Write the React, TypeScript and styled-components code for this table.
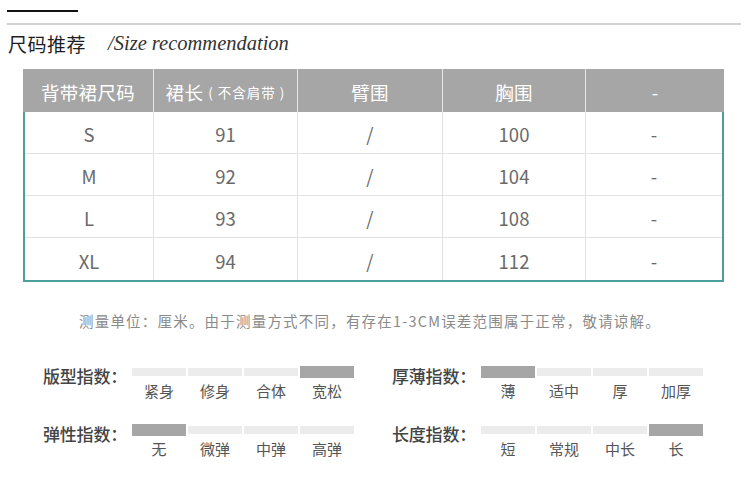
import React from 'react';
import styled, { createGlobalStyle } from 'styled-components';

const GlobalStyle = createGlobalStyle`
  html, body {
    margin: 0;
    padding: 0;
    background: #ffffff;
  }
  body {
    font-family: "Noto Sans CJK SC", "Noto Sans", sans-serif;
  }
`

const Page = styled.div`
  width: 750px;
  height: 487px;
  overflow: hidden;
  background: #fff;
  padding-top: 10px;
  box-sizing: border-box;
`
const ShortRule = styled.div`
  margin-left: 7px;
  width: 71px;
  height: 2px;
  background: #111;
`
const LongRule = styled.div`
  margin: 11px 0 0 7px;
  width: 734px;
  height: 2px;
  background: #d2d2d2;
`
const TitleRow = styled.div`
  display: flex;
  align-items: center;
  margin: 6px 0 0 8px;
  height: 24px;
`
const TitleCn = styled.span`
  font-size: 19px;
  letter-spacing: 0.5px;
  color: #1e1e1e;
`
const TitleEn = styled.span`
  margin-left: 22px;
  font-family: "Liberation Serif", serif;
  font-style: italic;
  font-size: 20.5px;
  color: #333;
`
const Table = styled.div`
  margin: 14px 0 0 23px;
  width: 701px;
`
const cols = '131px 144px 145px 143px 138px'

const HeaderRow = styled.div`
  display: grid;
  grid-template-columns: ${cols};
  height: 43px;
  background: #a6a6a6;
`
const HeadCell = styled.div<{ $last?: boolean }>`
  display: flex;
  align-items: center;
  justify-content: center;
  padding-top: 3px;
  color: #fff;
  font-size: 18.5px;
  letter-spacing: 0.3px;
  border-right: ${p => (p.$last ? 'none' : '1px solid #e6e6e6')};
`
const HeadNote = styled.span`
  font-size: 13.5px;
  margin-left: 5px;
  letter-spacing: 1px;
`
const Body = styled.div`
  border: 2px solid #4b9f99;
  border-top: none;
`
const BodyRow = styled.div<{ $last?: boolean }>`
  display: grid;
  grid-template-columns: 129px 144px 145px 143px 136px;
  height: 42px;
  border-bottom: ${p => (p.$last ? 'none' : '1px solid #e2e2e2')};
  box-sizing: border-box;
`
const Cell = styled.div<{ $last?: boolean }>`
  display: flex;
  align-items: center;
  justify-content: center;
  padding-top: 3px;
  color: #6a6a6a;
  font-size: 18.5px;
  border-right: ${p => (p.$last ? 'none' : '1px solid #e2e2e2')};
`
const Note = styled.div`
  margin-top: 29px;
  text-align: center;
  font-size: 14.5px;
  line-height: 20px;
  letter-spacing: 1.2px;
  color: #8a8a8a;
  padding-right: 10px;
`
const IndexGrid = styled.div`
  margin: 35px 0 0 43px;
  display: grid;
  grid-template-columns: 349px 330px;
  row-gap: 23px;
`
const IndexGroup = styled.div`
  display: flex;
  align-items: flex-start;
`
const IndexLabel = styled.div`
  flex: 0 0 89px;
  white-space: nowrap;
  font-size: 17px;
  line-height: 22px;
  color: #444;
  font-weight: 500;
  margin-top: -1px;
  letter-spacing: -0.2px;
`
const Segments = styled.div`
  display: grid;
  grid-template-columns: repeat(4, 54px);
  column-gap: 2px;
`
const Segment = styled.div`
  display: flex;
  flex-direction: column;
  align-items: center;
`
const BarTrack = styled.div`
  width: 100%;
  height: 12px;
  display: flex;
  align-items: center;
`
const Bar = styled.div<{ $on?: boolean }>`
  width: 100%;
  height: ${p => (p.$on ? '12px' : '8px')};
  background: ${p => (p.$on ? '#a6a6a6' : '#ececec')};
`
const SegText = styled.div`
  margin-top: 3px;
  font-size: 15px;
  line-height: 20px;
  color: #555;
`

const rows = [
  ['S', '91', '/', '100', '-'],
  ['M', '92', '/', '104', '-'],
  ['L', '93', '/', '108', '-'],
  ['XL', '94', '/', '112', '-'],
]

const indices = [
  { label: '版型指数：', items: ['紧身', '修身', '合体', '宽松'], on: 3 },
  { label: '厚薄指数：', items: ['薄', '适中', '厚', '加厚'], on: 0 },
  { label: '弹性指数：', items: ['无', '微弹', '中弹', '高弹'], on: 0 },
  { label: '长度指数：', items: ['短', '常规', '中长', '长'], on: 3 },
]

function App(): React.ReactElement {
  return (
    <Page>
      <GlobalStyle />
      <ShortRule />
      <LongRule />
      <TitleRow>
        <TitleCn>尺码推荐</TitleCn>
        <TitleEn>/Size recommendation</TitleEn>
      </TitleRow>
      <Table>
        <HeaderRow>
          <HeadCell>背带裙尺码</HeadCell>
          <HeadCell>
            裙长<HeadNote>( 不含肩带 )</HeadNote>
          </HeadCell>
          <HeadCell>臂围</HeadCell>
          <HeadCell>胸围</HeadCell>
          <HeadCell $last>-</HeadCell>
        </HeaderRow>
        <Body>
          {rows.map((r, i) => (
            <BodyRow key={r[0]} $last={i === rows.length - 1}>
              {r.map((v, j) => (
                <Cell key={j} $last={j === r.length - 1}>{v}</Cell>
              ))}
            </BodyRow>
          ))}
        </Body>
      </Table>
      <Note>测量单位：厘米。由于测量方式不同，有存在1-3CM误差范围属于正常，敬请谅解。</Note>
      <IndexGrid>
        {indices.map(g => (
          <IndexGroup key={g.label}>
            <IndexLabel>{g.label}</IndexLabel>
            <Segments>
              {g.items.map((t, k) => (
                <Segment key={t}>
                  <BarTrack>
                    <Bar $on={k === g.on} />
                  </BarTrack>
                  <SegText>{t}</SegText>
                </Segment>
              ))}
            </Segments>
          </IndexGroup>
        ))}
      </IndexGrid>
    </Page>
  );
}

export default App;
